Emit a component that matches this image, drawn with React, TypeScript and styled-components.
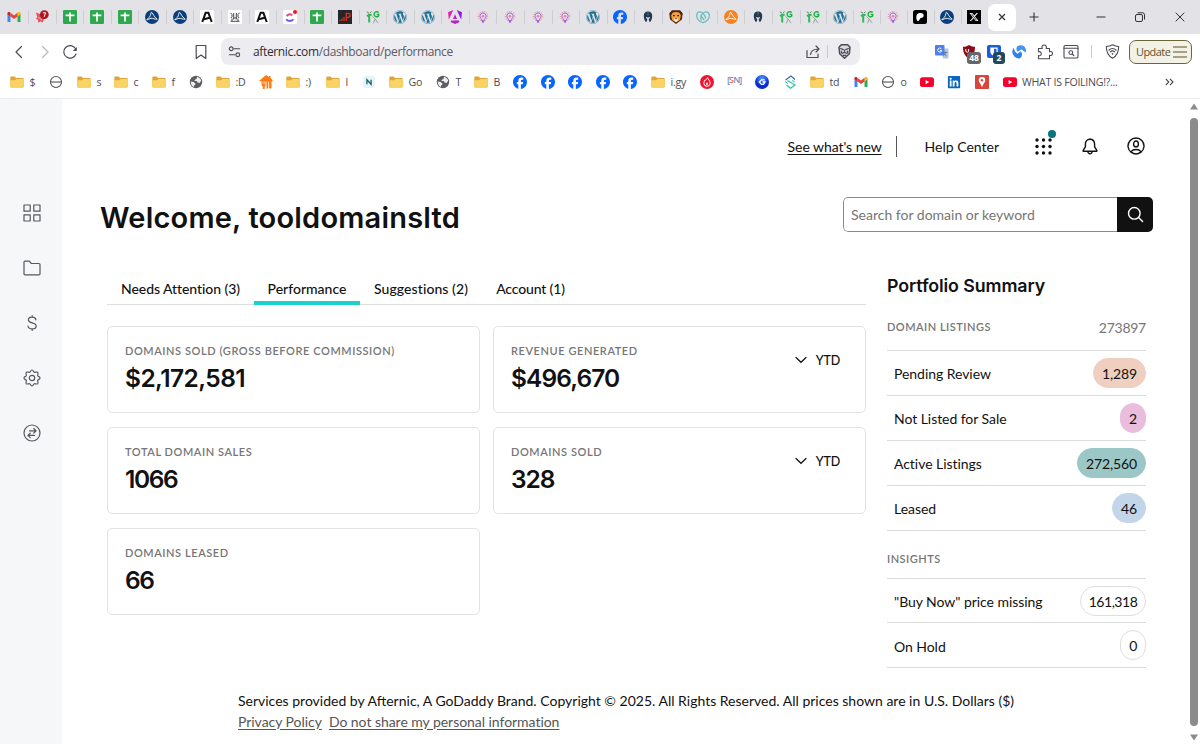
import React from "react";
import styled, { createGlobalStyle } from "styled-components";
import { FaFacebook, FaLinkedin, FaWordpress, FaPatreon, FaXTwitter } from "react-icons/fa6";

const Global = createGlobalStyle`
  * { box-sizing: border-box; }
  html, body { margin: 0; background: #fff; overflow: hidden; }
  svg { display: block; flex: none; }
`;

const ui = `"Open Sans", "Noto Sans", sans-serif`;
const body = `Lato, "Open Sans", sans-serif`;
const display = `Inter, "Open Sans", sans-serif`;

const Window = styled.div`
  width: 1200px;
  height: 744px;
  display: flex;
  flex-direction: column;
  background: #fff;
  font-family: ${body};
  color: #111;
`;

/* ---------- tab strip ---------- */

const TabStrip = styled.div`
  height: 34px;
  flex: none;
  display: flex;
  align-items: center;
  background: #e2e2e7;
`;

const TabCell = styled.div<{ $w: number; $line?: boolean }>`
  width: ${(p) => p.$w}px;
  height: 14px;
  flex: none;
  display: flex;
  align-items: center;
  justify-content: center;
  box-shadow: ${(p) => (p.$line ? "1px 0 0 #cdcdd2" : "none")};
`;

const ActiveTab = styled.div`
  width: 28px;
  height: 27px;
  flex: none;
  margin-left: 1px;
  border-radius: 7px;
  background: #fff;
  display: flex;
  align-items: center;
  justify-content: center;
`;

const StripButton = styled.div<{ $w: number; $ml?: number }>`
  width: ${(p) => p.$w}px;
  margin-left: ${(p) => p.$ml ?? 0}px;
  flex: none;
  display: flex;
  justify-content: center;
`;

/* ---------- toolbar ---------- */

const Toolbar = styled.div`
  height: 35px;
  flex: none;
  display: flex;
  align-items: center;
  background: #fff;
`;

const ToolSlot = styled.div<{ $w: number; $ml?: number }>`
  position: relative;
  width: ${(p) => p.$w}px;
  margin-left: ${(p) => p.$ml ?? 0}px;
  flex: none;
  display: flex;
  justify-content: center;
`;

const AddressBar = styled.div`
  width: 639px;
  height: 27px;
  flex: none;
  margin-left: 13px;
  padding: 0 8px 0 6px;
  border-radius: 8px;
  background: #ececf1;
  display: flex;
  align-items: center;
`;

const Url = styled.div`
  flex: 1;
  padding-left: 11px;
  font: 400 12px/16px ${ui};
  letter-spacing: -0.36px;
  white-space: nowrap;
  color: #5a5a63;
  b { font-weight: 400; color: #2c2c34; }
`;

const Divider = styled.div<{ $m: string }>`
  width: 1px;
  height: 13px;
  flex: none;
  margin: ${(p) => p.$m};
  background: #c9c9cf;
`;

const CountBadge = styled.span<{ $bg: string; $w: number; $x: number }>`
  position: absolute;
  left: ${(p) => p.$x}px;
  top: 7px;
  width: ${(p) => p.$w}px;
  height: 12px;
  border-radius: 3px;
  background: ${(p) => p.$bg};
  color: #fff;
  font: 700 8.5px/12px ${ui};
  text-align: center;
`;

const UpdateButton = styled.div`
  width: 63px;
  height: 24px;
  flex: none;
  margin-left: 9px;
  padding: 0 4px 0 6px;
  border: 1px solid #6f6638;
  border-radius: 7px;
  background: #f4f1e6;
  color: #5c5326;
  font: 400 10.9px/22px ${ui};
  letter-spacing: -0.5px;
  display: flex;
  align-items: center;
  justify-content: space-between;
`;

/* ---------- bookmarks ---------- */

const Bookmarks = styled.div`
  height: 30px;
  flex: none;
  padding: 0 0 4px 10px;
  display: flex;
  align-items: center;
  border-bottom: 1px solid #ececef;
`;

const BookmarkItem = styled.div<{ $w: number }>`
  width: ${(p) => p.$w}px;
  flex: none;
  display: flex;
  align-items: center;
  gap: 5.5px;
  white-space: nowrap;
  font: 400 10.6px/16px ${ui};
  letter-spacing: -0.27px;
  color: #4c4c52;
`;

/* ---------- page ---------- */

const Page = styled.div`
  flex: 1;
  min-height: 0;
  display: flex;
`;

const Sidebar = styled.nav`
  width: 62px;
  flex: none;
  padding: 104px 0 0 22px;
  display: flex;
  flex-direction: column;
  gap: 35px;
  background: #f5f7f8;
`;

const Main = styled.main`
  width: 1126px;
  flex: none;
  padding: 0 35px 0 38px;
  display: flex;
  flex-direction: column;
`;

const TopNav = styled.div`
  height: 22px;
  margin-top: 36px;
  padding-right: 8px;
  display: flex;
  align-items: center;
  justify-content: flex-end;
  font-size: 14px;
  line-height: 20px;
`;

const NavText = styled.span`
  padding-top: 1px;
`;

const NewsLink = styled.a`
  padding-top: 1px;
  letter-spacing: -0.06px;
  text-decoration: underline;
  text-underline-offset: 2px;
`;

const NavRule = styled.div`
  width: 1px;
  height: 21px;
  margin: 0 28px 0 14px;
  background: #555;
`;

const NavIcon = styled.div<{ $ml: number }>`
  position: relative;
  margin-left: ${(p) => p.$ml}px;
`;

const Dot = styled.span`
  position: absolute;
  right: -4px;
  top: -8px;
  width: 8px;
  height: 8px;
  border-radius: 50%;
  background: #09757a;
`;

const TitleRow = styled.div`
  height: 36px;
  margin-top: 40px;
  display: flex;
  align-items: center;
  justify-content: space-between;
`;

const Title = styled.h1`
  margin: 6px 0 0;
  font: 600 29px/36px ${display};
  letter-spacing: 0.2px;
`;

const Search = styled.div`
  width: 310px;
  height: 35px;
  margin-bottom: 1px;
  display: flex;
  border-radius: 5px;
  overflow: hidden;
`;

const SearchField = styled.div`
  flex: 1;
  padding: 1px 0 0 7px;
  border: 1px solid #8a8a8a;
  border-right: 0;
  border-radius: 5px 0 0 5px;
  font-size: 14px;
  line-height: 32px;
  letter-spacing: 0;
  color: #767676;
`;

const SearchButton = styled.div`
  width: 36px;
  background: #111;
  display: flex;
  align-items: center;
  justify-content: center;
`;

const Columns = styled.div`
  display: flex;
  height: 438px;
  padding: 0 7px 0 7px;
  justify-content: space-between;
`;

const Left = styled.section`
  width: 759px;
  padding-top: 42px;
`;

const Tabs = styled.div`
  height: 30px;
  display: flex;
  border-bottom: 1px solid #dedede;
`;

const Tab = styled.div<{ $active?: boolean; $w: number; $ls?: number }>`
  width: ${(p) => p.$w}px;
  height: 30px;
  border-bottom: 4px solid ${(p) => (p.$active ? "#1bd1cb" : "transparent")};
  font-weight: 500;
  font-size: 14px;
  line-height: 27px;
  letter-spacing: ${(p) => p.$ls ?? 0}px;
  text-align: center;
  white-space: nowrap;
`;

const Cards = styled.div`
  margin-top: 21px;
  display: grid;
  grid-template-columns: 373px 373px;
  grid-auto-rows: 87px;
  gap: 14px 13px;
`;

const Card = styled.div`
  padding: 17px 25px 0 17px;
  border: 1px solid #e3e3e3;
  border-radius: 5px;
  display: flex;
  justify-content: space-between;
`;

const Label = styled.div<{ $ls?: number }>`
  font: 600 11px/14px ${body};
  letter-spacing: ${(p) => p.$ls ?? 0.57}px;
  text-transform: uppercase;
  white-space: nowrap;
  color: #767676;
`;

const Value = styled.div<{ $ls: number }>`
  margin-top: 5px;
  font: 600 24.5px/30px ${display};
  letter-spacing: ${(p) => p.$ls}px;
`;

const Period = styled.div`
  height: 32px;
  display: flex;
  align-items: center;
  gap: 9px;
  font-size: 12.5px;
  letter-spacing: -0.2px;
  font-weight: 500;
`;

const Summary = styled.aside`
  width: 259px;
  padding-top: 41px;
`;

const SummaryTitle = styled.h2`
  margin: 0;
  font: 600 17.8px/24px ${display};
  letter-spacing: -0.1px;
`;

const SectionHead = styled.div<{ $h: number; $pt: number }>`
  height: ${(p) => p.$h}px;
  padding-top: ${(p) => p.$pt}px;
  border-bottom: 1px solid #dcdcdc;
  display: flex;
  justify-content: space-between;
`;

const Total = styled.div`
  font-size: 14px;
  line-height: 14px;
  padding-top: 1px;
  letter-spacing: -0.25px;
  color: #767676;
`;

const Row = styled.div`
  height: 44.9px;
  padding: 1px 0 0 7px;
  border-bottom: 1px solid #dcdcdc;
  display: flex;
  align-items: center;
  justify-content: space-between;
  font-size: 14px;
  letter-spacing: -0.05px;
`;

const RowName = styled.span`
  padding-top: 1px;
`;

const Pill = styled.span<{ $bg?: string; $w: number }>`
  width: ${(p) => p.$w}px;
  height: 30px;
  margin-bottom: 1px;
  padding-top: 1px;
  border-radius: 15px;
  border: 1px solid ${(p) => p.$bg ?? "#dedede"};
  background: ${(p) => p.$bg ?? "#fff"};
  line-height: 28px;
  letter-spacing: ${(p) => (p.$bg ? "-0.1px" : "-0.45px")};
  text-align: center;
`;

const Footer = styled.footer`
  padding: 20px 0 0 138px;
  font-size: 14px;
  line-height: 20.5px;
  white-space: nowrap;
  a { color: #555; text-decoration: underline; text-underline-offset: 2px; letter-spacing: -0.04px; margin-right: 7px; }
`;

const Scroll = styled.div`
  width: 12px;
  flex: none;
  display: flex;
  flex-direction: column;
  align-items: center;
  padding: 4px 0 3px 0;
  gap: 8px;
`;

const Thumb = styled.div`
  flex: 1;
  width: 8px;
  border-radius: 4px;
  background: #8b8b8b;
`;

/* ---------- site icons ---------- */

const Svg = ({ s = 14, vb = 14, children }: { s?: number; vb?: number; children: React.ReactNode }) => (
  <svg width={s} height={s} viewBox={`0 0 ${vb} ${vb}`} fill="none">{children}</svg>
);

const Gmail = () => (
  <Svg>
    <path d="M0.5 12V3.8L3.5 6v6z" fill="#4285f4" />
    <path d="M10.5 12V6l3-2.2V12z" fill="#34a853" />
    <path d="M.5 4.2V3.3C.5 2 2 1.6 3 2.4l.5.4V6.4z" fill="#c5221f" />
    <path d="M13.5 4.2V3.3C13.5 2 12 1.6 11 2.4l-.5.4v3.6z" fill="#fbbc04" />
    <path d="M3.5 2.8 7 5.5l3.5-2.7v3.6L7 9.1 3.5 6.4z" fill="#ea4335" />
  </Svg>
);
const RedBadge = () => (
  <Svg>
    <path d="M1 2.500 5 4l5.500 4-1.700 1.200L8 12.500 6 11.500l-3 1 .2-2.800L1 9l1.200-2z" fill="#dc5860" />
    <path d="M3 7l4 3" stroke="#f7d3d5" strokeWidth=".7" />
    <circle cx="9.300" cy="4.600" r="4.400" fill="#b3141f" />
    <path d="M7.900 2.800h2.700L9.200 6.800" stroke="#fff" strokeWidth="1" />
  </Svg>
);
const Sheet = () => (
  <Svg>
    <rect width="14" height="14" rx="1.2" fill="#2fa84f" />
    <path d="M7 2.600v9M2.600 5.400h8.800" stroke="#fff" strokeWidth="1.700" />
  </Svg>
);
const Sail = ({ c = "#0b3f7c" }: { c?: string }) => (
  <Svg>
    <circle cx="7" cy="7" r="7" fill={c} />
    <path d="M6.500 2.200c1 .2 1.800 3.300 3.400 5 .8.8 2 1.300 2.300 2-2.200.5-4.300-1.200-6.200-.9-1.600.2-2.600 1.500-4.200 1.400.2-.9 1.900-1.400 2.800-2.600 1.200-1.500 1.100-4.600 1.900-4.900z" stroke="#fff" strokeWidth=".9" strokeLinejoin="round" />
  </Svg>
);
const ASquare = () => (
  <Svg>
    <rect width="14" height="14" rx="1.5" fill="#fff" />
    <path d="M2.300 12 5.600 2.800h2.800L11.700 12M4 9.200 9.500 7.800" stroke="#111" strokeWidth="2" />
  </Svg>
);
const Crest = () => (
  <Svg>
    <rect width="14" height="14" rx="1.500" fill="#fff" />
    <path d="M2.500 2.800 4 4.500v2.200L2.800 8M11.500 2.800 10 4.500v2.200L11.200 8M5.700 3v6.500M8.300 3v6.500M2.500 11.300h9M4 8.500v2.500M10 8.500v2.500M5.700 8h2.600" stroke="#333" strokeWidth=".9" />
  </Svg>
);
const Click = () => (
  <Svg>
    <rect width="14" height="14" rx="1.500" fill="#fff" />
    <path d="M3.700 6.200C5 3.800 7.700 3.600 9.300 5.400" stroke="#f0458a" strokeWidth="2" />
    <path d="M3.300 9.200c1.700 2.500 5.300 2.500 7 0" stroke="#6a5cf5" strokeWidth="2" />
    <circle cx="12" cy="2" r="2" fill="#f01818" />
  </Svg>
);
const Bars = () => (
  <Svg>
    <rect width="14" height="14" fill="#26262a" />
    <path d="M1.800 11V9.700M3.900 11V8.500M6 11V7M8.300 11V3.400h1.900a1.900 1.900 0 0 1 0 3.900H8.300" stroke="#e0301e" strokeWidth="1.300" />
  </Svg>
);
const GreenG = () => (
  <Svg>
    <path d="M.8 1.800 3 3.200M5.500 1.500 4 3.200" stroke="#5a6b5a" strokeWidth=".9" />
    <path d="M3.200 5.500v7M1 6.200l2.200-1.500L5.600 5" stroke="#2dbb55" strokeWidth="2" />
    <path d="M12.700 2.600C11 .9 8 2 8 4.300s3 3.200 4.700 1.700V4.500h-2" stroke="#17b33f" strokeWidth="1.400" />
    <path d="M6.500 6.500 9.300 9l-2 4.300M9.300 9c1 1 .9 2.800 3 3.800" stroke="#8a9c8e" strokeWidth=".9" />
  </Svg>
);
const Wp = () => <FaWordpress size={14} color="#1c6f94" />;
const Angular = () => (
  <Svg>
    <defs><linearGradient id="ng" x1="0" x2="1"><stop stopColor="#f0269a" /><stop offset="1" stopColor="#8514f5" /></linearGradient></defs>
    <path d="M5.200 0 0 2.200l.8 7.600zM8.800 0 14 2.200l-.8 7.600zM7 4.200 9 9H5zM3.200 10.500h7.600L11.500 12 7 14l-4.500-2z" fill="url(#ng)" />
  </Svg>
);
const Bulb = () => (
  <Svg>
    <circle cx="7" cy="6.200" r="4.600" stroke="#e3a3a8" strokeWidth="1.300" strokeDasharray="1.100 1.100" />
    <path d="M7 2.900a3.200 3.200 0 0 1 1.900 5.700L8.400 10.500H5.600l-.5-1.900A3.200 3.200 0 0 1 7 2.900z" fill="#ead5f3" stroke="#a566cc" strokeWidth="1" />
    <path d="M5.600 11.300h2.800L7 13.300z" fill="#8a46bf" />
    <circle cx="7" cy="6.200" r="1.200" fill="#d98aa0" />
  </Svg>
);
const Fb = () => <FaFacebook size={14} color="#0866ff" />;
const Helmet = () => (
  <Svg>
    <path d="M7 1.500c2.800 0 4.200 1.800 4.200 4.200 0 2.500-.6 4.800-2.400 6.600L7.600 9.500 8.800 8V6.800L7 7.800 5.200 6.800V8l1.200 1.500-1.200 2.800C3.400 10.500 2.800 8.200 2.800 5.700 2.800 3.300 4.200 1.500 7 1.500z" fill="#22384e" />
    <path d="M7 1.500v4" stroke="#7f93a5" strokeWidth=".6" />
  </Svg>
);
const Lion = () => (
  <Svg>
    <path d="M3 .3h8l2.700 3-.8 6.200L7 14 1.100 9.500.3 3.300z" fill="#4a2413" />
    <path d="M3.800 2.600 7 1.900l3.200.7 1.700 3-1 4.300L7 12.400 3.100 9.900l-1-4.300z" fill="#f5a13c" />
    <path d="M4 5.600h1.700M8.300 5.600H10" stroke="#2c1408" strokeWidth="1.100" />
    <path d="M5.200 8.600 7 8l1.800.6v2L7 11.900l-1.800-1.300z" fill="#fff0d5" />
    <path d="M6 8.300h2L7 9.800z" fill="#2c1408" />
  </Svg>
);
const GoHeart = () => (
  <Svg>
    <path d="M7 12.800C3 11.300.7 8.700.7 5.500.7 1.700 4.300.6 7 3.300c2.700-2.700 6.300-1.600 6.300 2.200 0 3.200-2.300 5.800-6.300 7.300zM7 3.300C4.800 5.300 4.500 8 5.300 10M4.700 5.700 8 9.800M7 3.300C8.500 4.800 9.500 6.300 9.500 8" stroke="#5fbfbb" strokeWidth="1.200" strokeLinecap="round" strokeLinejoin="round" />
  </Svg>
);
const Patreon = () => (
  <Svg>
    <rect width="14" height="14" rx="2.500" fill="#000" />
    <g transform="translate(3 3)"><FaPatreon size={8} color="#fff" /></g>
  </Svg>
);
const XLogo = () => (
  <Svg>
    <rect width="14" height="14" fill="#000" />
    <g transform="translate(2 2)"><FaXTwitter size={10} color="#fff" /></g>
  </Svg>
);

const tabIcons: React.FC[] = [
  Gmail, RedBadge, Sheet, Sheet, Sheet, Sail, Sail, ASquare, Crest, ASquare, Click, Sheet, Bars, GreenG,
  Wp, Wp, Angular, Bulb, Bulb, Bulb, Bulb, Wp, Fb, Helmet, Lion, GoHeart,
  () => <Sail c="#f58220" />, Helmet, GreenG, GreenG, Wp, GreenG, Bulb, Patreon, Sail, XLogo,
];

const Folder = () => (
  <Svg>
    <path d="M.3 2.400c0-.5.300-.8.800-.8h3.600l1.400 1.300h6.800c.5 0 .8.300.8.800v8.100c0 .5-.3.800-.8.800H1.100c-.5 0-.8-.3-.8-.8z" fill="#e0a53a" />
    <path d="M.3 5.200h4.900l1.200-1.300h7.300v7.700c0 .5-.3.800-.8.800H1.100c-.5 0-.8-.3-.8-.8z" fill="#f9d464" />
  </Svg>
);
const Minus = () => (
  <Svg>
    <circle cx="7" cy="7" r="5.500" stroke="#55555a" strokeWidth="1.100" />
    <path d="M1.500 7h11" stroke="#55555a" strokeWidth="1.100" />
  </Svg>
);
const Globe = () => (
  <Svg>
    <circle cx="7" cy="7" r="6.200" fill="#5b5d62" />
    <path d="M1.800 6.500 4.500 7l2 1.500-.5 1.500-1 .5-.3 1.800C3 11.200 1.800 9.200 1.800 6.500zM8 1.800c2 .5 3.700 2 4.200 4L10.500 8 8.500 7.500 8 6H5.500l.3-1.300 1.700-.7z" fill="#fff" opacity=".9" />
  </Svg>
);
const ForkHouse = () => (
  <Svg>
    <path d="M7 0 10 2V1h1.500v2L14 5.500l-1.500 1V13q-1.200 1-2.400 0V6.500h-.8v7H7.500v-7h-1V10q0 1.500-.8 1.700V14H3.800v-2.400Q2.500 11 2.500 9V6.500L0 6z" fill="#ff7a10" />
    <path d="M4.100 6v3M5.400 6v3" stroke="#fff" strokeWidth=".5" />
  </Svg>
);
const NTile = () => (
  <Svg>
    <rect x="1" y="1" width="12" height="12" rx="2" fill="#e3f5f7" />
    <path d="M4.900 9.300v-4.600l4.200 4.600v-4.600" stroke="#23606f" strokeWidth="1.300" />
  </Svg>
);
const Drop = () => (
  <Svg>
    <circle cx="7" cy="7" r="7" fill="#f0142f" />
    <path d="M7.500 2.500c.3 2 2.700 3 2.700 5.600a3.200 3.200 0 0 1-6.400 0c0-1.500 1-2 1.200-3.200 1 .4 2-.8 2.500-2.400z" stroke="#fff" strokeWidth="1" />
    <path d="M7 7.200c.8.800 1 1.300 1 1.800a1 1 0 0 1-2 0c0-.6.4-1 1-1.800z" fill="#fff" />
  </Svg>
);
const SnMark = styled.span`
  width: 15px;
  margin-top: -4px;
  font: 600 9px/12px ${ui};
  letter-spacing: -0.9px;
  color: #6f8fc4;
  i { font-style: normal; color: #e8694f; }
`;
const BlueG = () => (
  <Svg>
    <defs><radialGradient id="bg" cy=".25"><stop stopColor="#4c9dff" /><stop offset="1" stopColor="#0a2bd8" /></radialGradient></defs>
    <circle cx="7" cy="7" r="7" fill="url(#bg)" />
    <path d="M9.800 4.800H6.500L4.300 7l2.200 2.400h2L10 7H7.500" stroke="#fff" strokeWidth="1.300" />
  </Svg>
);
const SLines = () => (
  <Svg>
    <path d="M2.500 5 8 1l4 3.500" stroke="#356fae" strokeWidth="1.200" />
    <path d="M4.500 5.500 12 10l-4.500 3.300L3.500 10" stroke="#2fc0a4" strokeWidth="1.200" />
    <path d="M2 6.500 5 8.500M9 5.500 12 7" stroke="#2fc0a4" strokeWidth="1" />
  </Svg>
);
const YouTube = () => (
  <Svg>
    <rect y="2.200" width="14" height="9.800" rx="2.500" fill="#f8002c" />
    <path d="M5.600 5v4.200L9.200 7.100z" fill="#fff" />
  </Svg>
);
const LinkedIn = () => <FaLinkedin size={14} color="#0a66c2" />;
const MapPin = () => (
  <Svg>
    <rect width="14" height="14" rx="1" fill="#d9453a" />
    <path d="M7 2a3.300 3.300 0 0 1 3.300 3.300C10.300 7.500 8 9 7 12.300 6 9 3.700 7.500 3.700 5.300A3.300 3.300 0 0 1 7 2z" fill="#fff" />
    <circle cx="7" cy="5.300" r="1.200" fill="#d9453a" />
  </Svg>
);

const bookmarks: [React.FC, string, number][] = [
  [Folder, "$", 39], [Minus, "", 28], [Folder, "s", 37], [Folder, "c", 38], [Folder, "f", 37], [Globe, "", 27],
  [Folder, ":D", 43], [ForkHouse, "", 27], [Folder, ":)", 40], [Folder, "l", 35.5], [NTile, "", 27.5],
  [Folder, "Go", 47], [Globe, "T", 38], [Folder, "B", 39], [Fb, "", 27.5], [Fb, "", 27.5], [Fb, "", 27.5],
  [Fb, "", 27.5], [Fb, "", 28], [Folder, "i.gy", 49], [Drop, "", 27],
  [() => <SnMark>[<i>S</i>N]</SnMark>, "", 28], [BlueG, "", 27.5], [SLines, "", 27.5], [Folder, "td", 43.5],
  [Gmail, "", 27.5], [Minus, "o", 38.5], [YouTube, "", 27.5], [LinkedIn, "", 27.5], [MapPin, "", 28],
  [YouTube, "WHAT IS FOILING!?...", 162],
];

/* ---------- page icons ---------- */

const line = { stroke: "#55585c", strokeWidth: 1.2, strokeLinejoin: "round" as const, strokeLinecap: "round" as const };

const sideIcons = [
  <Svg key="g" s={20} vb={20}><path d="M2 2h6.200v6.200H2zM11.800 2H18v6.200h-6.200zM2 11.800h6.200V18H2zM11.800 11.800H18V18h-6.200z" {...line} /></Svg>,
  <Svg key="f" s={20} vb={20}><path d="M2 4.200c0-.7.4-1.100 1.100-1.100h4.200l2 2.400h7.600c.7 0 1.100.4 1.100 1.100v9.100c0 .7-.4 1.100-1.100 1.100H3.100c-.7 0-1.100-.4-1.100-1.100z" {...line} /></Svg>,
  <Svg key="d" s={20} vb={20}><path d="M13.900 6.800C13.600 5 12.200 4.200 10.200 4.200c-2.200 0-3.800 1-3.800 2.800 0 4 7.800 1.800 7.800 6 0 1.900-1.700 2.900-4 2.900-2.400 0-4-1-4.200-2.900M10.200 2.500v1.500M10.200 16v1.500" {...line} /></Svg>,
  <Svg key="s" s={20} vb={20}>
    <path d="M10 2 C11.400 2 11.600 3.900 12.300 4.300 C13.100 4.700 14.700 3.400 15.700 4.300 C16.600 5.300 15.300 6.900 15.700 7.700 C16.100 8.400 18 8.600 18 10 C18 11.400 16.100 11.600 15.700 12.300 C15.300 13.100 16.600 14.700 15.700 15.700 C14.700 16.600 13.100 15.300 12.300 15.700 C11.600 16.100 11.400 18 10 18 C8.600 18 8.400 16.100 7.700 15.700 C6.900 15.300 5.300 16.600 4.300 15.700 C3.400 14.700 4.700 13.100 4.300 12.300 C3.900 11.600 2 11.400 2 10 C2 8.600 3.900 8.400 4.300 7.700 C4.700 6.900 3.400 5.300 4.300 4.300 C5.300 3.400 6.900 4.700 7.700 4.300 C8.400 3.900 8.600 2 10 2z" {...line} />
    <circle cx="10" cy="10" r="2.700" {...line} />
  </Svg>,
  <Svg key="t" s={20} vb={20}>
    <circle cx="10" cy="10" r="8" {...line} />
    <path d="M7.500 7.900h6.500M11.800 5.500l2.300 2.400-2.300 2.100M12.500 12.400H6M8.200 10.200 5.900 12.400l2.300 2.200" {...line} />
  </Svg>,
];

const Chevron = () => (
  <svg width="12" height="8" viewBox="0 0 12 8" fill="none"><path d="M1 1.500 6 6.300l5-4.800" stroke="#111" strokeWidth="1.200" strokeLinecap="round" /></svg>
);

const g = { stroke: "#4b4b52", strokeWidth: 1.2, strokeLinecap: "round" as const, strokeLinejoin: "round" as const };

const cards: { label: string; value: string; ls: number; ytd?: boolean }[] = [
  { label: "Domains sold (gross before commission)", value: "$2,172,581", ls: -0.55 },
  { label: "Revenue generated", value: "$496,670", ls: -0.9, ytd: true },
  { label: "Total domain sales", value: "1066", ls: -1.4 },
  { label: "Domains sold", value: "328", ls: -1.1, ytd: true },
  { label: "Domains leased", value: "66", ls: -1.5 },
];

const listings: [string, string, string, number][] = [
  ["Pending Review", "1,289", "#efcfbf", 53],
  ["Not Listed for Sale", "2", "#eabddd", 26],
  ["Active Listings", "272,560", "#9bc8c7", 69],
  ["Leased", "46", "#c3d5e8", 34],
];

export default function App() {
  return (
    <Window>
      <Global />
      <TabStrip>
        {tabIcons.map((Icon, i) => (
          <TabCell key={i} $w={i > 28 ? 26.85 : i === 0 ? 28.2 : 27.55} $line={i < 35}><Icon /></TabCell>
        ))}
        <ActiveTab><svg width="8" height="8" viewBox="0 0 8 8"><path d="M1 1l6 6M7 1 1 7" stroke="#333" strokeWidth="1.200" /></svg></ActiveTab>
        <StripButton $w={12} $ml={12}><svg width="10" height="10" viewBox="0 0 10 10"><path d="M5 .5v9M.5 5h9" stroke="#333" strokeWidth="1.100" /></svg></StripButton>
        <StripButton $w={12} $ml={55}><svg width="10" height="10" viewBox="0 0 10 10"><path d="M.5 5h9" stroke="#333" /></svg></StripButton>
        <StripButton $w={12} $ml={27}><svg width="10" height="10" viewBox="0 0 10 10" fill="none" stroke="#333"><rect x=".5" y="2.500" width="7" height="7" rx="1.500" /><path d="M2.500.8H7.500Q9.500.8 9.500 2.800V7.500" /></svg></StripButton>
        <StripButton $w={12} $ml={28}><svg width="10" height="10" viewBox="0 0 10 10"><path d="M.7.7l8.600 8.600M9.300.7.7 9.300" stroke="#333" /></svg></StripButton>
      </TabStrip>

      <Toolbar>
        <ToolSlot $w={16} $ml={11}><Svg s={16} vb={16}><path d="M10.500 2.500 5 8l5.500 5.500" {...g} /></Svg></ToolSlot>
        <ToolSlot $w={16} $ml={10}><Svg s={16} vb={16}><path d="M5.500 2.500 11 8l-5.500 5.500" {...g} stroke="#b8b8bd" /></Svg></ToolSlot>
        <ToolSlot $w={16} $ml={9}><Svg s={16} vb={16}><path d="M13.600 4.800A6.300 6.300 0 1 0 14 10" {...g} /><path d="M14.800 3v4h-4z" fill="#4b4b52" /></Svg></ToolSlot>
        <ToolSlot $w={14} $ml={116}><Svg s={16} vb={16}><path d="M3.200 1.500h9.600v13L8 11l-4.800 3.500z" {...g} /></Svg></ToolSlot>
        <AddressBar>
          <Svg s={15} vb={16}><circle cx="4.500" cy="5" r="2" {...g} /><path d="M7.500 5h6" {...g} /><circle cx="11.500" cy="11.500" r="2" {...g} /><path d="M2.500 11.500h6" {...g} /></Svg>
          <Url><b>afternic.com</b>/dashboard/performance</Url>
          <Svg s={14} vb={14}><path d="M1 5.500v7h11V9M4.500 9.500c.5-3.500 3-5.500 8-5.500M10 1l3 3-3 3" {...g} /></Svg>
          <Divider $m="0 9px 0 7px" />
          <Svg s={15} vb={15}>
            <path d="M4.300.8h6.400l2.300 2.400-.7 6.600L7.500 14.300 2.700 9.800 2 3.200z" fill="#d9d9e0" stroke="#4b4b55" strokeWidth="1.500" strokeLinejoin="round" />
            <path d="M3.600 4.500 6.300 5.600M11.400 4.500 8.700 5.600M7.500 6v2.300M5.200 9.500l2.300-1.200 2.300 1.200M6.300 11.300h2.400M4.500 7.200v1.500M10.500 7.200v1.500" stroke="#4b4b55" strokeWidth="1.200" strokeLinecap="round" />
          </Svg>
        </AddressBar>
        <ToolSlot $w={14} $ml={75}>
          <Svg><path d="M6 3.500h7.500v10H8z" fill="#b9c4d6" /><rect width="9.500" height="10.500" rx="1" fill="#4a82ec" /><path d="M6.300 3.800a2 2 0 1 0 .4 1.800H5" stroke="#fff" strokeWidth="1" /><path d="M8.500 7.500h4M10.500 6.500c0 2-1 3.500-2 4M9 8.500c.5 1 1.500 2 2.500 2.300" stroke="#4f6e9e" strokeWidth=".8" /></Svg>
        </ToolSlot>
        <ToolSlot $w={14} $ml={13}>
          <Svg><path d="M7 0c2 1.300 4 1.800 6 1.800 0 5.200-1 8.500-6 12.200C2 10.300 1 7 1 1.800 3 1.800 5 1.300 7 0z" fill="#8c0b17" /><path d="M3.800 4v2.500q1.400 1.500 2.800 0V4" stroke="#fff" strokeWidth="1" /></Svg>
          <CountBadge $bg="#666668" $w={14} $x={5}>48</CountBadge>
        </ToolSlot>
        <ToolSlot $w={14} $ml={11}>
          <Svg><rect width="14" height="13" rx="2" fill="#175ddc" /><path d="M3.300 2.500h7.400v4.300c0 2-1.500 3.200-3.700 4.200-2.200-1-3.700-2.200-3.700-4.200z" fill="#fff" /><path d="M7 3.700v6c1.500-.7 2.500-1.600 2.500-3V3.700z" fill="#175ddc" /></Svg>
          <CountBadge $bg="#23495f" $w={12} $x={6}>2</CountBadge>
        </ToolSlot>
        <ToolSlot $w={14} $ml={11}>
          <Svg>
            <path d="M6 .8A5.500 5.500 0 0 1 13.800 4c.4 1.300.1 2.600-.5 3.500L9.500 4.200 5.800 6.800c-1.800-1.300-1.800-4.500.2-6z" fill="#3a97f7" />
            <path d="M.2 6.500A8 8 0 0 1 2 2.500c-.3 2.600 1 4.300 3.500 6.300L8.500 6.500c2.300 1.600 2 5.300-1 7A7 7 0 0 1 .2 6.500z" fill="#2f7ff0" />
          </Svg>
        </ToolSlot>
        <ToolSlot $w={16} $ml={11}>
          <Svg s={16} vb={16}><path d="M1.500 4.500h3.700C4.500 2.500 5.500 1 7.200 1s2.700 1.500 2 3.500h3.300v3.300c1.500-.7 3 .2 3 1.700s-1.500 2.500-3 1.800v3.500H1.500v-3.300c1.700.6 2.800-.4 2.800-1.800S3.200 7.200 1.500 7.800z" {...g} strokeWidth={1.100} /></Svg>
        </ToolSlot>
        <ToolSlot $w={16} $ml={10}>
          <Svg s={16} vb={16}><rect x="1" y="1.500" width="14" height="12.500" rx="1.200" {...g} strokeWidth={1.100} /><path d="M1 4.300h14" {...g} strokeWidth={1.100} /><circle cx="7.800" cy="8.600" r="1.900" {...g} strokeWidth={1.100} /><path d="m9.300 10 1.500 1.600" {...g} /></Svg>
        </ToolSlot>
        <Divider $m="0 13px 0 12px" />
        <ToolSlot $w={15}>
          <Svg s={15} vb={15}><path d="M7.500.7c2 1.200 4 1.700 6.200 1.800 0 5.500-1.400 9-6.200 11.800C2.700 11.500 1.300 8 1.300 2.500 3.500 2.400 5.500 1.900 7.500.7z" {...g} strokeWidth={1.100} /><path d="M4 6c2-1.800 5-1.800 7 0M5.300 7.900c1.300-1.100 3.100-1.100 4.400 0" {...g} /><circle cx="7.500" cy="9.800" r=".9" fill="#4b4b52" /></Svg>
        </ToolSlot>
        <UpdateButton>Update<svg width="14" height="12" viewBox="0 0 14 12"><path d="M0 1h14M0 6h14M0 11h14" stroke="#5c5326" strokeWidth="1.100" /></svg></UpdateButton>
      </Toolbar>

      <Bookmarks>
        {bookmarks.map(([Icon, text, w], i) => (
          <BookmarkItem key={i} $w={w}><Icon />{text}</BookmarkItem>
        ))}
        <svg width="9" height="8" viewBox="0 0 9 8" fill="none"><path d="m.8.800 3 3.200-3 3.200M5 .800 8 4 5 7.200" stroke="#444" strokeWidth="1.100" /></svg>
      </Bookmarks>

      <Page>
        <Sidebar>{sideIcons}</Sidebar>
        <Main>
          <TopNav>
            <NewsLink>See what's new</NewsLink>
            <NavRule />
            <NavText>Help Center</NavText>
            <NavIcon $ml={36}>
              <Svg s={17} vb={17}>{[2, 8.5, 15].map((y) => [2, 8.5, 15].map((x) => <circle key={`${x}-${y}`} cx={x} cy={y} r="1.700" fill="#111" />))}</Svg>
              <Dot />
            </NavIcon>
            <NavIcon $ml={29}>
              <Svg s={18} vb={18}><path d="M9 2.300c-3 0-4.600 2.200-4.600 5v2.500L2.200 13.300c-.3.600 0 1 .6 1h12.400c.6 0 .9-.4.600-1l-2.200-3.500V7.300c0-2.800-1.600-5-4.600-5zM9 2.300V1.200M6.800 14.500C7 16 7.900 16.700 9 16.700s2-.7 2.200-2.200" stroke="#111" strokeWidth="1.400" strokeLinejoin="round" /></Svg>
            </NavIcon>
            <NavIcon $ml={28}>
              <Svg s={18} vb={18}><path d="M13.500 15.600A8 8 0 1 0 4.500 15.600" stroke="#111" strokeWidth="1.400" strokeLinecap="round" /><ellipse cx="9" cy="6.900" rx="2.400" ry="2.900" stroke="#111" strokeWidth="1.400" /><path d="M4.300 15c.5-1.700 2.200-2.500 4.700-2.500s4.200.8 4.700 2.500C12.500 16.200 11 17 9 17s-3.500-.8-4.700-2z" stroke="#111" strokeWidth="1.400" strokeLinejoin="round" /></Svg>
            </NavIcon>
          </TopNav>

          <TitleRow>
            <Title>Welcome, tooldomainsltd</Title>
            <Search>
              <SearchField>Search for domain or keyword</SearchField>
              <SearchButton><Svg s={17} vb={17}><circle cx="7.300" cy="7.300" r="5.800" stroke="#fff" strokeWidth="1.400" /><path d="m11.600 11.600 4 4" stroke="#fff" strokeWidth="1.400" strokeLinecap="round" /></Svg></SearchButton>
            </Search>
          </TitleRow>

          <Columns>
            <Left>
              <Tabs>
                <Tab $w={147} $ls={-0.07}>Needs Attention (3)</Tab>
                <Tab $w={106} $active>Performance</Tab>
                <Tab $w={122} $ls={0.08}>Suggestions (2)</Tab>
                <Tab $w={97} $ls={-0.15}>Account (1)</Tab>
              </Tabs>
              <Cards>
                {cards.map((c) => (
                  <Card key={c.label}>
                    <div>
                      <Label>{c.label}</Label>
                      <Value $ls={c.ls}>{c.value}</Value>
                    </div>
                    {c.ytd && <Period><Chevron />YTD</Period>}
                  </Card>
                ))}
              </Cards>
            </Left>
            <Summary>
              <SummaryTitle>Portfolio Summary</SummaryTitle>
              <SectionHead $h={53} $pt={22}>
                <Label $ls={0.5}>Domain listings</Label>
                <Total>273897</Total>
              </SectionHead>
              {listings.map(([name, n, bg, w]) => (
                <Row key={name}><RowName>{name}</RowName><Pill $bg={bg} $w={w}>{n}</Pill></Row>
              ))}
              <SectionHead $h={48} $pt={21}><Label $ls={0.5}>Insights</Label></SectionHead>
              <Row><RowName>"Buy Now" price missing</RowName><Pill $w={66}>161,318</Pill></Row>
              <Row><RowName>On Hold</RowName><Pill $w={26}>0</Pill></Row>
            </Summary>
          </Columns>

          <Footer>
            <div>Services provided by Afternic, A GoDaddy Brand. Copyright © 2025. All Rights Reserved. All prices shown are in U.S. Dollars ($)</div>
            <div><a>Privacy Policy</a><a>Do not share my personal information</a></div>
          </Footer>
        </Main>
        <Scroll>
          <svg width="8" height="7" viewBox="0 0 8 7"><path d="M4 .5 8 6.500H0z" fill="#8b8b8b" /></svg>
          <Thumb />
          <svg width="8" height="7" viewBox="0 0 8 7"><path d="M0 .5h8L4 6.500z" fill="#8b8b8b" /></svg>
        </Scroll>
      </Page>
    </Window>
  );
}
